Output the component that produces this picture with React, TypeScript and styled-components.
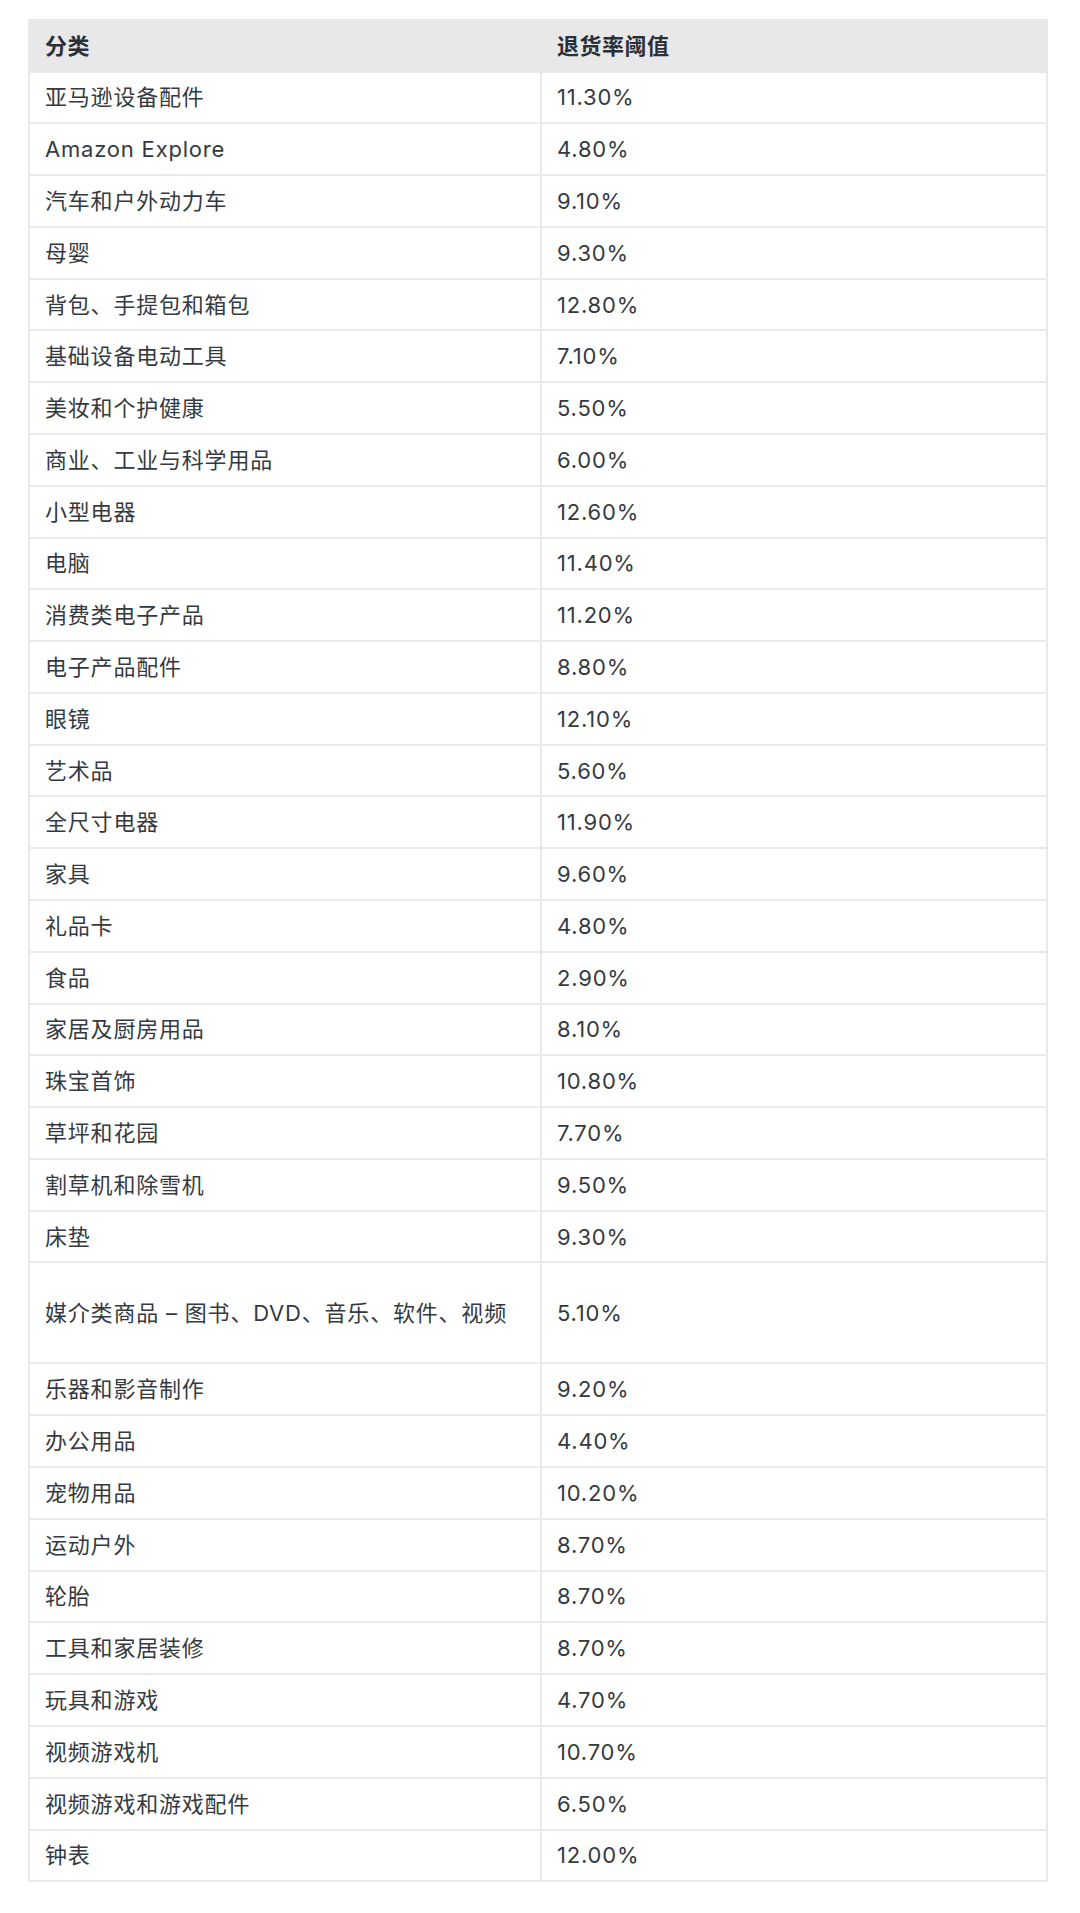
import React from "react";
import styled, { createGlobalStyle } from "styled-components";

const GlobalStyle = createGlobalStyle`
  html, body {
    margin: 0;
    padding: 0;
    background: #ffffff;
  }
  body {
    font-family: Inter, "Noto Sans CJK SC", "Noto Sans", sans-serif;
    -webkit-font-smoothing: antialiased;
  }
`;

const Page = styled.div`
  padding: 19px 34px 31px 28px;
  box-sizing: border-box;
  width: 1080px;
`;

const Table = styled.table`
  width: 1018px;
  border-collapse: collapse;
  table-layout: fixed;
  border: 2px solid #e9e9e9;
  font-size: 22px;
  line-height: 30px;
  color: #353a41;
`;

const HeadCell = styled.th`
  background: #e8e8e8;
  text-align: left;
  font-weight: 600;
  color: #2b3038;
  padding: 10px 15px 9.5px;
  border: 2px solid #e9e9e9;
  letter-spacing: 0.5px;
`;

const Cell = styled.td<{ $tall?: boolean }>`
  padding: ${(p) => (p.$tall ? "34.5px 15px" : "9.9px 15px")};
  border: 2px solid #e9e9e9;
  vertical-align: middle;
  white-space: nowrap;
  letter-spacing: 0.8px;
`;

const rows: [string, string][] = [
  ["亚马逊设备配件", "11.30%"],
  ["Amazon Explore", "4.80%"],
  ["汽车和户外动力车", "9.10%"],
  ["母婴", "9.30%"],
  ["背包、手提包和箱包", "12.80%"],
  ["基础设备电动工具", "7.10%"],
  ["美妆和个护健康", "5.50%"],
  ["商业、工业与科学用品", "6.00%"],
  ["小型电器", "12.60%"],
  ["电脑", "11.40%"],
  ["消费类电子产品", "11.20%"],
  ["电子产品配件", "8.80%"],
  ["眼镜", "12.10%"],
  ["艺术品", "5.60%"],
  ["全尺寸电器", "11.90%"],
  ["家具", "9.60%"],
  ["礼品卡", "4.80%"],
  ["食品", "2.90%"],
  ["家居及厨房用品", "8.10%"],
  ["珠宝首饰", "10.80%"],
  ["草坪和花园", "7.70%"],
  ["割草机和除雪机", "9.50%"],
  ["床垫", "9.30%"],
  ["媒介类商品 – 图书、DVD、音乐、软件、视频", "5.10%"],
  ["乐器和影音制作", "9.20%"],
  ["办公用品", "4.40%"],
  ["宠物用品", "10.20%"],
  ["运动户外", "8.70%"],
  ["轮胎", "8.70%"],
  ["工具和家居装修", "8.70%"],
  ["玩具和游戏", "4.70%"],
  ["视频游戏机", "10.70%"],
  ["视频游戏和游戏配件", "6.50%"],
  ["钟表", "12.00%"],
];

export default function App() {
  return (
    <>
      <GlobalStyle />
      <Page>
        <Table>
          <colgroup>
            <col style={{ width: "512px" }} />
            <col style={{ width: "506px" }} />
          </colgroup>
          <thead>
            <tr>
              <HeadCell>分类</HeadCell>
              <HeadCell>退货率阈值</HeadCell>
            </tr>
          </thead>
          <tbody>
            {rows.map(([name, rate]) => {
              const tall = name.startsWith("媒介类");
              return (
                <tr key={name}>
                  <Cell $tall={tall}>{name}</Cell>
                  <Cell $tall={tall}>{rate}</Cell>
                </tr>
              );
            })}
          </tbody>
        </Table>
      </Page>
    </>
  );
}
